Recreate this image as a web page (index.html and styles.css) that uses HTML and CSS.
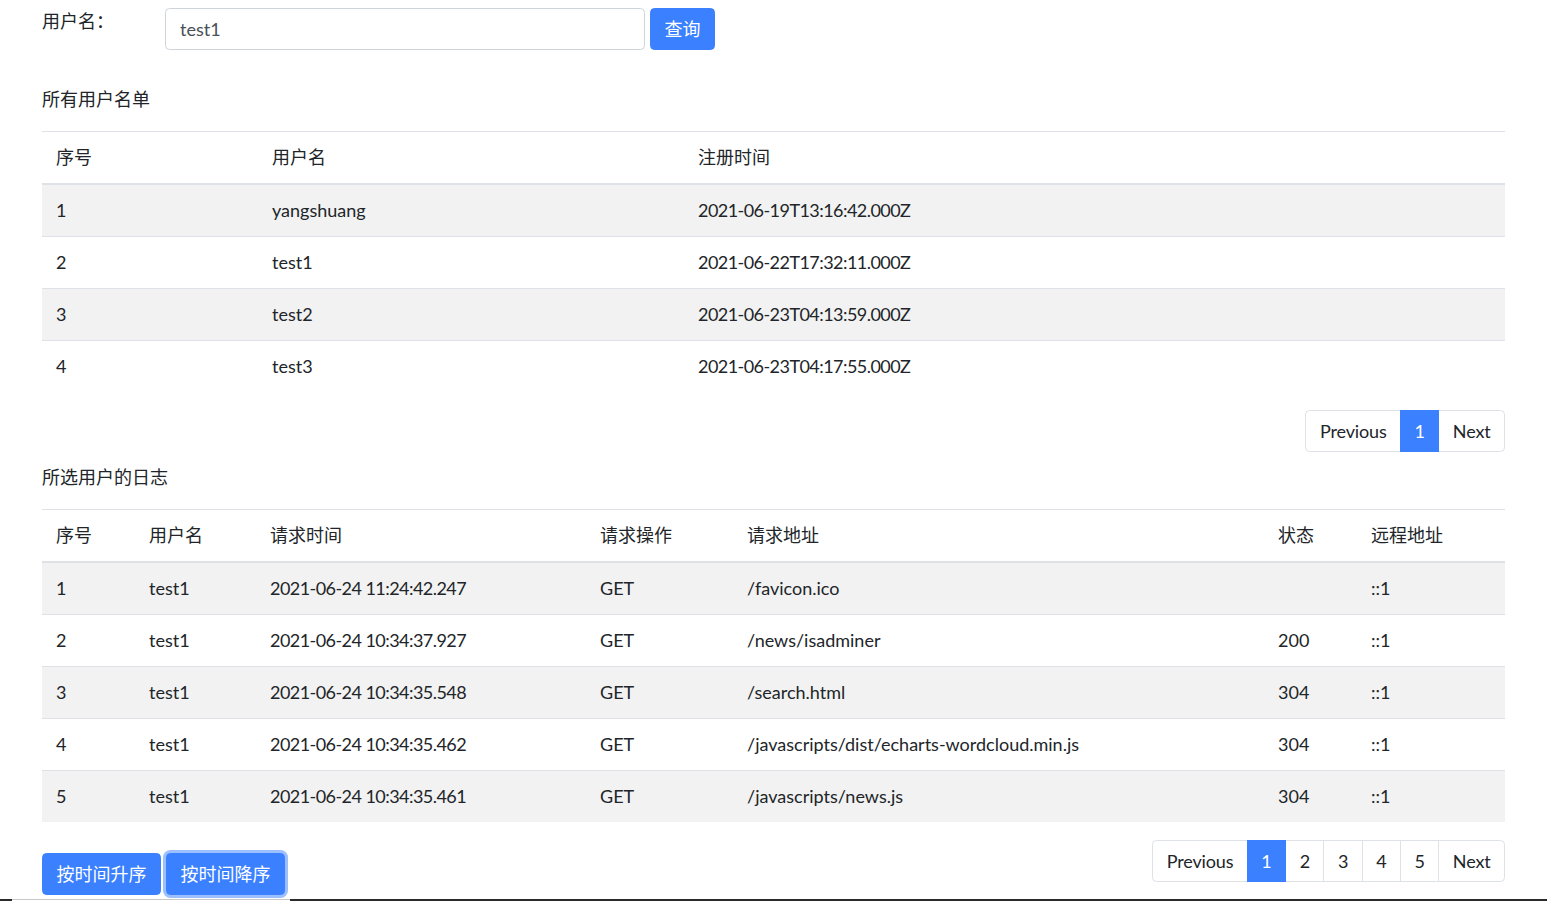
FILE: index.html
```html
<!DOCTYPE html>
<html lang="zh">
<head>
<meta charset="utf-8">
<title>用户日志</title>
<link rel="stylesheet" href="styles.css">
</head>
<body>
<div class="page">
  <div class="search-row">
    <label class="search-label">用户名：</label>
    <input class="search-input" type="text" value="test1">
    <button class="btn">查询</button>
  </div>

  <h5 class="section-title first">所有用户名单</h5>
  <table class="table t-users">
    <colgroup><col class="c-u1"><col class="c-u2"><col></colgroup>
    <thead><tr><th>序号</th><th>用户名</th><th>注册时间</th></tr></thead>
    <tbody>
      <tr><td>1</td><td>yangshuang</td><td class="date">2021-06-19T13:16:42.000Z</td></tr>
      <tr><td>2</td><td>test1</td><td class="date">2021-06-22T17:32:11.000Z</td></tr>
      <tr><td>3</td><td>test2</td><td class="date">2021-06-23T04:13:59.000Z</td></tr>
      <tr><td>4</td><td>test3</td><td class="date">2021-06-23T04:17:55.000Z</td></tr>
    </tbody>
  </table>
  <div class="pager-row">
    <ul class="pagination">
      <li class="page-link">Previous</li>
      <li class="page-link active">1</li>
      <li class="page-link">Next</li>
    </ul>
  </div>

  <h5 class="section-title second">所选用户的日志</h5>
  <table class="table t-logs">
    <colgroup><col class="c-l1"><col class="c-l2"><col class="c-l3"><col class="c-l4"><col class="c-l5"><col class="c-l6"><col></colgroup>
    <thead><tr><th>序号</th><th>用户名</th><th>请求时间</th><th>请求操作</th><th>请求地址</th><th>状态</th><th>远程地址</th></tr></thead>
    <tbody>
      <tr><td>1</td><td>test1</td><td class="date">2021-06-24 11:24:42.247</td><td>GET</td><td>/favicon.ico</td><td></td><td>::1</td></tr>
      <tr><td>2</td><td>test1</td><td class="date">2021-06-24 10:34:37.927</td><td>GET</td><td>/news/isadminer</td><td>200</td><td>::1</td></tr>
      <tr><td>3</td><td>test1</td><td class="date">2021-06-24 10:34:35.548</td><td>GET</td><td>/search.html</td><td>304</td><td>::1</td></tr>
      <tr><td>4</td><td>test1</td><td class="date">2021-06-24 10:34:35.462</td><td>GET</td><td>/javascripts/dist/echarts-wordcloud.min.js</td><td>304</td><td>::1</td></tr>
      <tr><td>5</td><td>test1</td><td class="date">2021-06-24 10:34:35.461</td><td>GET</td><td>/javascripts/news.js</td><td>304</td><td>::1</td></tr>
    </tbody>
  </table>

  <div class="bottom-row">
    <div class="sort-buttons">
      <button class="btn">按时间升序</button>
      <button class="btn focused">按时间降序</button>
    </div>
    <ul class="pagination">
      <li class="page-link">Previous</li>
      <li class="page-link active">1</li>
      <li class="page-link">2</li>
      <li class="page-link">3</li>
      <li class="page-link">4</li>
      <li class="page-link">5</li>
      <li class="page-link">Next</li>
    </ul>
  </div>
</div>
<div class="footer-bar">
  <div class="fb-dark fb-left"></div>
  <div class="fb-light"></div>
  <div class="fb-dark fb-rest"></div>
</div>
</body>
</html>
```

FILE: styles.css
```css
* { box-sizing: border-box; }

html, body {
  margin: 0;
  padding: 0;
  background: #fff;
}

body {
  font-family: "Lato", "Noto Sans CJK SC", sans-serif;
  font-size: 18px;
  line-height: 1.5;
  color: #212529;
}

.page {
  padding: 8px 42px 0 42px;
}

/* search row */
.search-row {
  display: flex;
  align-items: flex-start;
  height: 42px;
}

.search-label {
  width: 123px;
  line-height: 27px;
}

.search-input {
  width: 480px;
  height: 42px;
  padding: 0 14px;
  border: 1px solid #ced4da;
  border-radius: 4.5px;
  font: inherit;
  color: #495057;
  outline: none;
  margin-right: 5px;
}

.btn {
  height: 42px;
  padding: 0 13.5px;
  border: 1px solid #3a80ff;
  background: #3a80ff;
  color: #fff;
  font: inherit;
  line-height: 27px;
  border-radius: 4.5px;
  cursor: pointer;
}

.btn.focused {
  box-shadow: 0 0 0 3px rgba(58, 128, 255, 0.5);
}

/* titles */
.section-title {
  margin: 0;
  font-size: 18px;
  font-weight: 400;
  line-height: 27px;
  margin-bottom: 18px;
}

.section-title.first { margin-top: 36px; }
.section-title.second { margin-top: 12px; }

/* tables */
.table {
  width: 100%;
  border-collapse: collapse;
  table-layout: fixed;
  margin-bottom: 18px;
}

.table th,
.table td {
  text-align: left;
  font-weight: 400;
  padding: 12px 14px;
  line-height: 27px;
  border-top: 1px solid #dee2e6;
  white-space: nowrap;
}

.table td.date {
  letter-spacing: -0.55px;
}

.table thead th {
  border-bottom: 2px solid #dee2e6;
}

.table tbody tr:nth-child(odd) {
  background: #f2f2f2;
}

.c-u1 { width: 216px; }
.c-u2 { width: 426px; }

.c-l1 { width: 93px; }
.c-l2 { width: 121px; }
.c-l3 { width: 330px; }
.c-l4 { width: 147px; }
.c-l5 { width: 531px; }
.c-l6 { width: 93px; }

/* pagination */
.pager-row {
  display: flex;
  justify-content: flex-end;
}

.pagination {
  display: flex;
  list-style: none;
  margin: 0;
  padding: 0;
}

.page-link {
  padding: 9px 13.5px;
  line-height: 22px;
  border: 1px solid #dee2e6;
  margin-left: -1px;
  color: #212529;
  background: #fff;
  letter-spacing: -0.15px;
}

.page-link:first-child {
  margin-left: 0;
  border-radius: 4.5px 0 0 4.5px;
}

.page-link:last-child {
  border-radius: 0 4.5px 4.5px 0;
}

.page-link.active {
  background: #3a80ff;
  border-color: #3a80ff;
  color: #fff;
  position: relative;
  z-index: 1;
}

/* bottom */
.bottom-row {
  display: flex;
  justify-content: space-between;
  align-items: flex-start;
}

.sort-buttons {
  display: flex;
  gap: 5px;
  margin-top: 13px;
}

.footer-bar {
  display: flex;
  height: 3px;
  margin-top: 4px;
}

.fb-dark { background: #2b2b2b; }
.fb-left { width: 12px; }
.fb-light { width: 278px; border-top: 1px solid #c8c8c8; }
.fb-rest { flex: 1; }
```
